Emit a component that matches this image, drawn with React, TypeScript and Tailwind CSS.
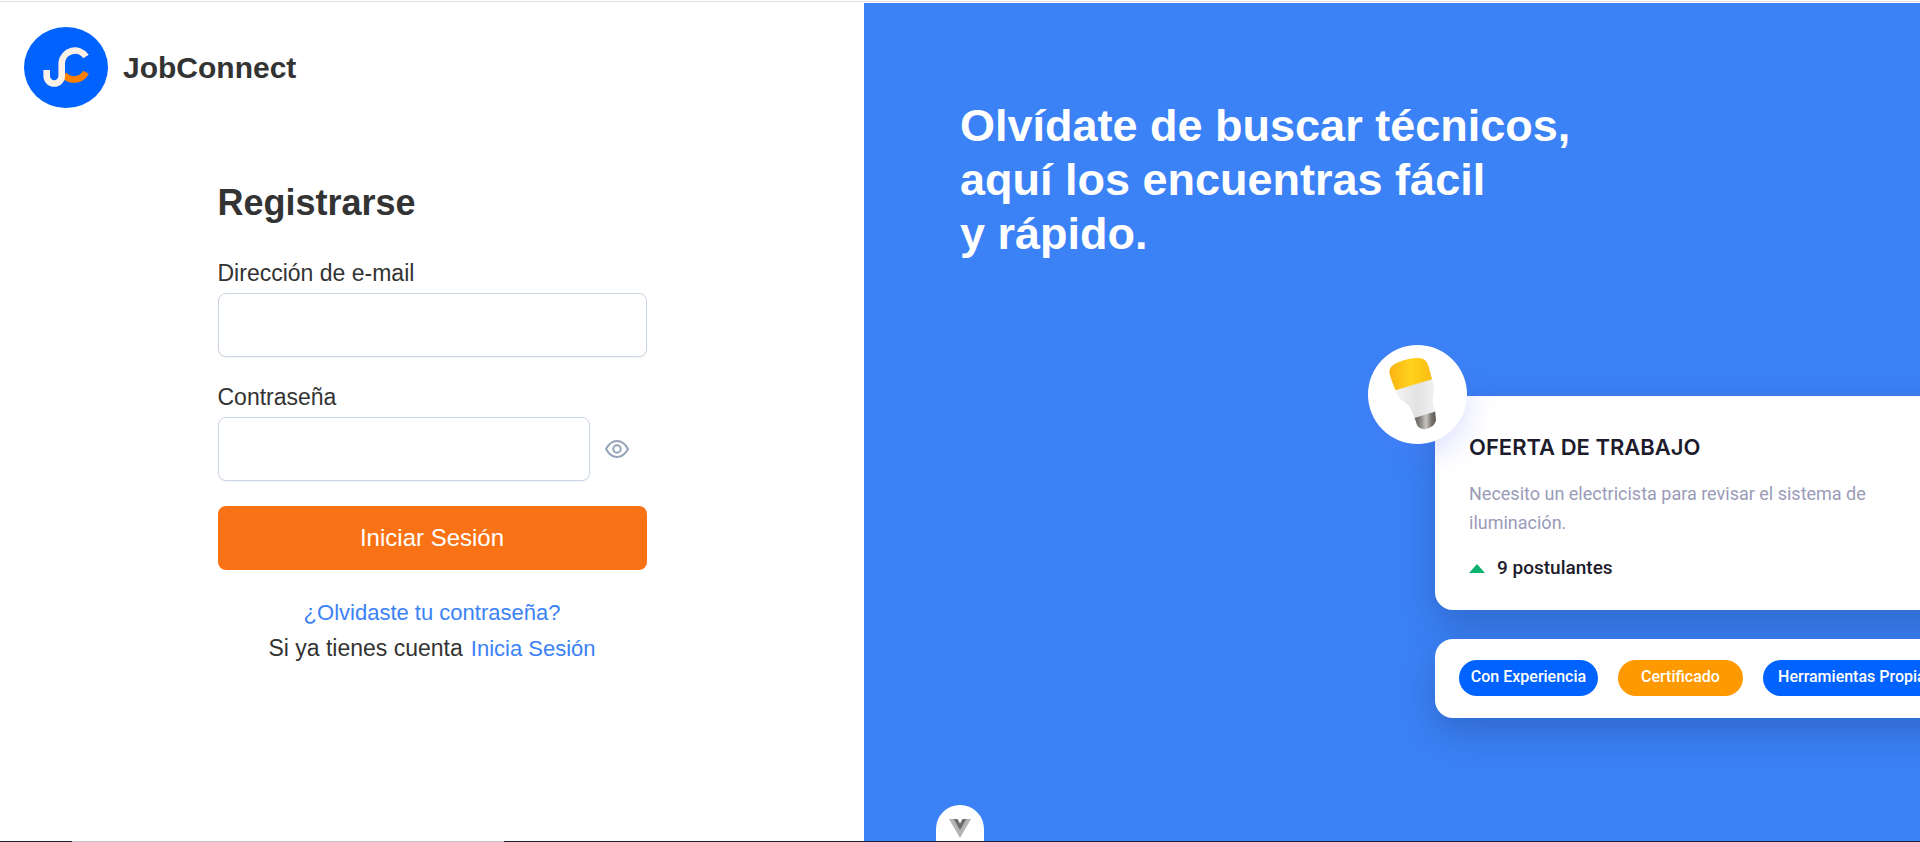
import React, { useState } from "react";

function Logo() {
  return (
    <svg viewBox="0 0 84 81" className="h-[81px] w-[84px]" aria-hidden="true">
      <ellipse cx="42" cy="40.5" rx="42" ry="40.5" fill="#0062ff" />
      <path d="M40 48 A13.5 13.5 0 0 0 62 45.300" fill="none" stroke="#ff8000" strokeWidth="6.6" />
      <path
        d="M22.700 43 V49 A7.500 7.500 0 0 0 37.700 49 V35.700 A13.300 13.300 0 0 1 62 29.500"
        fill="none"
        stroke="#fbf1e6"
        strokeWidth="6.6"
      />
    </svg>
  );
}

function Eye() {
  return (
    <svg viewBox="0 0 24 24" className="size-6" fill="none" stroke="#94a3b8" strokeWidth="2" aria-hidden="true">
      <path strokeLinejoin="round" d="M1 12 C4 6.500 7.6 4 12 4 S20 6.500 23 12 C20 17.500 16.4 20 12 20 S4 17.500 1 12 Z" />
      <circle cx="12" cy="12" r="3.7" />
    </svg>
  );
}

function Bulb() {
  return (
    <svg viewBox="0 0 99 99" className="size-full" aria-hidden="true">
      <defs>
        <linearGradient id="cap" x1="0" x2="1">
          <stop offset="0" stopColor="#fbb414" />
          <stop offset="0.5" stopColor="#ffd21c" />
          <stop offset="1" stopColor="#fbbd12" />
        </linearGradient>
        <linearGradient id="body" x1="0" x2="1">
          <stop offset="0" stopColor="#f4f4f4" />
          <stop offset="0.55" stopColor="#e2e2e3" />
          <stop offset="1" stopColor="#f1f1f1" />
        </linearGradient>
        <linearGradient id="base" x1="0" x2="1">
          <stop offset="0" stopColor="#5e5a57" />
          <stop offset="0.3" stopColor="#8b8783" />
          <stop offset="0.55" stopColor="#c9c5c1" />
          <stop offset="0.8" stopColor="#77726e" />
          <stop offset="1" stopColor="#5c5855" />
        </linearGradient>
      </defs>
      <path d="M46 71 L67 65 L68 75 Q67.500 80 61 83 Q57 85 53 83.500 Q49 82 48 77 Z" fill="url(#base)" />
      <path
        d="M27 45 L64 34 C66.500 42 66 46 65 52 C64 58 66 62 67.500 66.500 L46.300 73 C45 67 42 61 37 57.500 C32 54 29 51 27 45 Z"
        fill="url(#body)"
      />
      <path
        d="M27.500 45.300 C25 39 22.500 33 21.500 28 C20.500 22 26 19 31 17 C37 14.500 44 13 50 13 C56 13 59 16 60.500 21 L64 34.200 Z"
        fill="url(#cap)"
      />
    </svg>
  );
}

const inputStyle = "h-16 min-w-0 rounded-lg border border-slate-300 bg-white px-4 text-[22px] shadow-xs outline-none";

function Chip({ className, children }: { className: string; children: React.ReactNode }) {
  return (
    <span
      className={`flex h-9 shrink-0 items-center justify-center rounded-full pb-0.5 font-[Roboto,sans-serif] text-base font-medium text-white ${className}`}
    >
      {children}
    </span>
  );
}

export default function App() {
  const [visible, setVisible] = useState(false);
  return (
    <div className="flex h-screen flex-col overflow-hidden bg-white font-['Liberation_Sans',Arial,sans-serif] text-[#333333]">
      <div className="mt-px h-px shrink-0 bg-[#dfe1e0]" />
      <main className="mt-px flex min-h-0 flex-1">
        <section className="w-[45%] shrink-0">
          <header className="flex items-center gap-[15px] pt-6 pl-6">
            <Logo />
            <span className="text-[30px] leading-9 font-bold">JobConnect</span>
          </header>
          <form className="mx-auto mt-[73px] flex w-[429px] flex-col" onSubmit={(e) => e.preventDefault()}>
            <h1 className="text-4xl leading-[44px] font-bold">Registrarse</h1>
            <label htmlFor="email" className="mt-8 text-[23px] leading-8">
              Dirección de e-mail
            </label>
            <input id="email" type="email" className={`mt-1 w-full ${inputStyle}`} />
            <label htmlFor="password" className="mt-6 text-[23px] leading-8">
              Contraseña
            </label>
            <div className="mt-1 flex items-center gap-[15px]">
              <input id="password" type={visible ? "text" : "password"} className={`w-[372px] ${inputStyle}`} />
              <button type="button" aria-label="Mostrar contraseña" onClick={() => setVisible(!visible)}>
                <Eye />
              </button>
            </div>
            <button type="submit" className="mt-[25px] h-16 w-full rounded-lg bg-[#f97316] text-2xl text-white">
              Iniciar Sesión
            </button>
            <div className="mt-[25px] flex flex-col items-center">
              <a href="#recuperar" className="text-[22px] leading-9 text-[#3b82f6]">
                ¿Olvidaste tu contraseña?
              </a>
              <p className="flex items-baseline gap-2 text-[23px] leading-[34px]">
                Si ya tienes cuenta
                <a href="#ingresar" className="text-[22px] text-[#3b82f6]">
                  Inicia Sesión
                </a>
              </p>
            </div>
          </form>
        </section>
        <section className="relative min-w-0 flex-1 overflow-hidden bg-[#3b82f6] pl-24">
          <h2 className="mt-24 text-[45px] leading-[54px] font-bold text-white">
            Olvídate de buscar técnicos,
            <br />
            aquí los encuentras fácil
            <br />y rápido.
          </h2>
          <div className="mt-[135px] ml-[475px] w-[640px]">
            <article className="relative h-[214px] rounded-[18px] bg-white pt-9 pl-[34px] shadow-[0_14px_36px_rgba(20,40,90,0.28)]">
              <div className="absolute -top-[51px] -left-[67px] size-[99px] rounded-full bg-white shadow-[0_10px_30px_rgba(90,110,255,0.22)]">
                <Bulb />
              </div>
              <h3 className="font-[Inter,sans-serif] text-[22px] leading-[30px] font-semibold text-[#1d1b2c]">
                OFERTA DE TRABAJO
              </h3>
              <p className="mt-[17px] w-[400px] font-[Roboto,sans-serif] text-lg leading-[29px] text-[#9a9bb8]">
                Necesito un electricista para revisar el sistema de iluminación.
              </p>
              <p className="mt-[17px] flex items-center gap-3 font-[Roboto,sans-serif] text-[19px] leading-7 font-medium text-[#1d1b2c]">
                <svg viewBox="0 0 16 9" className="h-[9px] w-4" aria-hidden="true">
                  <path d="M0 9 L8 0 L16 9 Z" fill="#0bb36c" />
                </svg>
                9 postulantes
              </p>
            </article>
            <div className="relative mt-[29px] flex h-[79px] items-center gap-5 rounded-[18px] bg-white pb-0.5 pl-6 shadow-[0_14px_36px_rgba(20,40,90,0.28)]">
              <Chip className="w-[139px] bg-[#0062ff]">Con Experiencia</Chip>
              <Chip className="w-[125px] bg-[#ff9900]">Certificado</Chip>
              <Chip className="w-[186px] bg-[#0062ff]">Herramientas Propias</Chip>
            </div>
          </div>
          <div className="absolute bottom-0 left-[72px] flex h-9 w-12 justify-center rounded-t-3xl bg-white pt-3.5">
            <svg viewBox="0 0 22 19" className="h-[19px] w-[22px]" aria-hidden="true">
              <path d="M0 0 H4.500 L11 11.500 L17.500 0 H22 L11 19 Z" fill="#b4b4b4" />
              <path d="M4.500 0 H8.500 L11 4.500 L13.500 0 H17.500 L11 11.500 Z" fill="#6b6b6b" />
            </svg>
          </div>
        </section>
      </main>
      <div className="flex h-px shrink-0 bg-[#1f2233]">
        <div className="ml-[72px] w-[432px] bg-[#c2c2c2]" />
      </div>
    </div>
  );
}
